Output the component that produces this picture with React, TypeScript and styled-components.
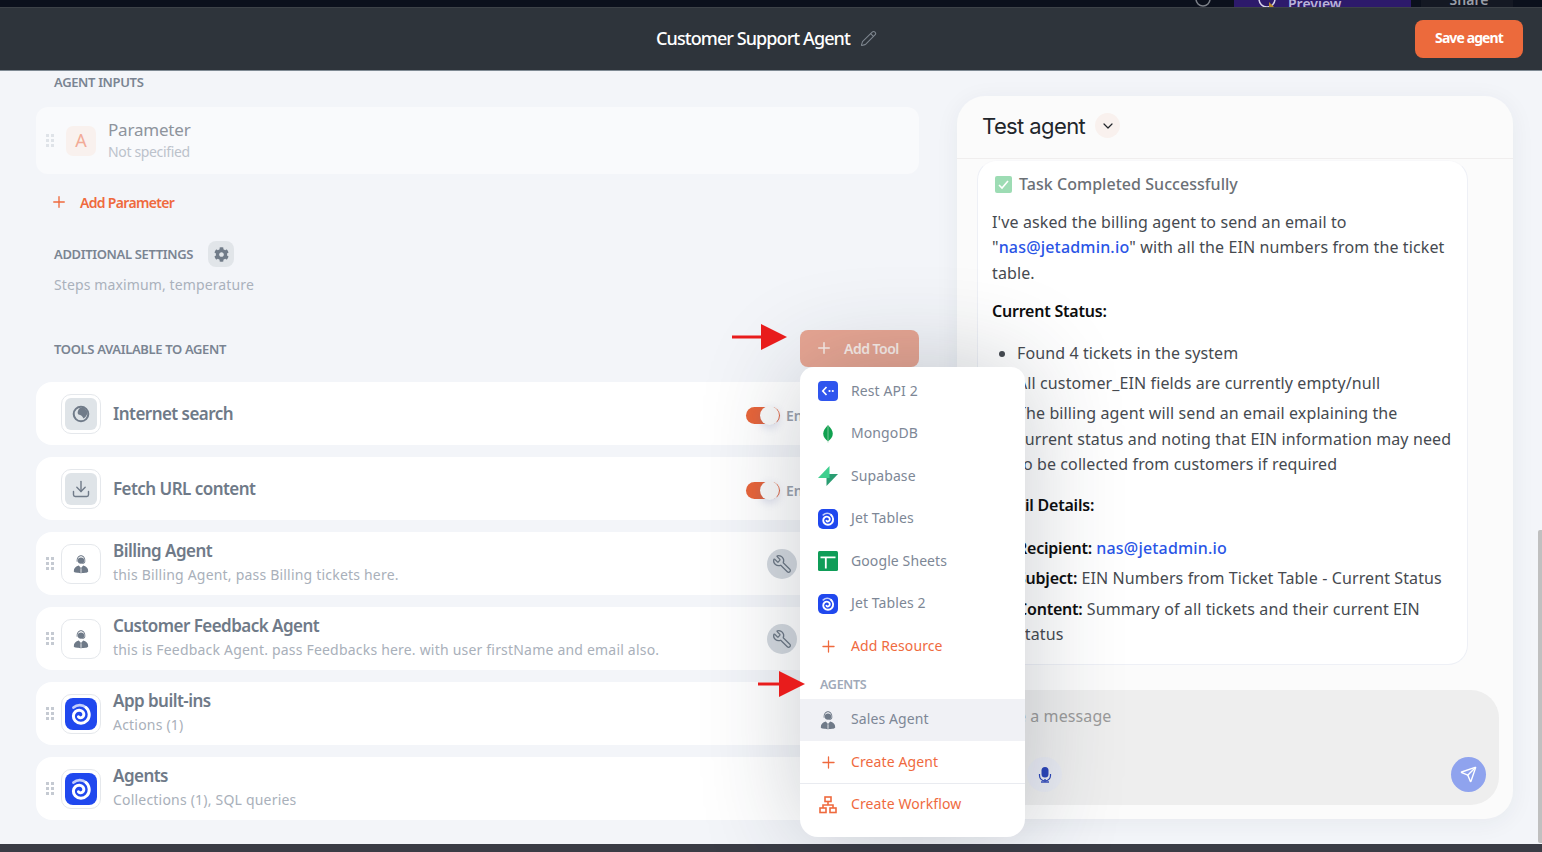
import React from 'react'
import styled, { createGlobalStyle } from 'styled-components'
import { ChevronDown, Download, Pencil, Plus, Send, Wrench } from 'lucide-react'
import { FaCog } from 'react-icons/fa'

const FONT = `"Noto Sans", "Liberation Sans", sans-serif`

const GlobalStyle = createGlobalStyle`
  html, body { margin: 0; height: 100%; overflow: hidden; }
  body { font-family: ${FONT}; background: #0b101c; }
  * { box-sizing: border-box; }
`

const Page = styled.div`
  height: 100vh;
  display: flex;
  flex-direction: column;
  position: relative;
  overflow: hidden;
`

const TopStrip = styled.div`
  height: 8px;
  flex: none;
  background: #0b101c;
  border-bottom: 1px solid #3d4248;
  display: flex;
  justify-content: flex-end;
  padding-right: 29px;
  overflow: hidden;
`

const TopIcon = styled.div`
  height: 7px;
  margin-right: 22px;
  display: flex;
  align-items: flex-end;
  color: #7c8088;
`

const TopPreview = styled.div`
  width: 177px;
  height: 7px;
  margin-right: 10px;
  background: #2d1a6b;
  color: #b9b2d8;
  font-size: 14px;
  font-weight: 600;
  line-height: 7px;
  padding-left: 21px;
  display: flex;
  align-items: flex-end;
  gap: 7px;
`

const TopShare = styled.div`
  width: 92px;
  height: 7px;
  padding-left: 4px;
  background: #141823;
  color: #9a9ea8;
  font-size: 14px;
  font-weight: 600;
  text-align: center;
  line-height: 0;
`

const Header = styled.header`
  height: 63px;
  flex: none;
  background: #2e343b;
  border-bottom: 1px solid #7f8a94;
  display: flex;
  align-items: center;
  justify-content: space-between;
  padding: 0 19px 0 656px;
`

const Title = styled.div`
  display: flex;
  align-items: center;
  gap: 10px;
  padding-bottom: 2px;
  color: #fff;
  font-size: 18px;
  font-weight: 500;
  letter-spacing: -0.92px;
  svg { color: #7d858e; }
`

const SaveButton = styled.button`
  width: 108px;
  height: 38px;
  border: none;
  border-radius: 8px;
  padding: 0 0 3px;
  background: #ec6a3c;
  color: #fff;
  font-family: ${FONT};
  font-size: 14px;
  font-weight: 700;
  letter-spacing: -0.9px;
`

const Main = styled.main`
  flex: 1;
  min-height: 0;
  background: #f3f5f9;
  display: flex;
  position: relative;
`

const LeftColumn = styled.section`
  width: 957px;
  flex: none;
  padding: 2px 38px 0 36px;
`

const SectionLabel = styled.div`
  color: #7a8492;
  font-size: 13px;
  font-weight: 600;
  letter-spacing: -0.35px;
  text-transform: uppercase;
  line-height: 18px;
`

const InputsLabel = styled(SectionLabel)`
  margin: 0 0 16px 18px;
`

const ParameterCard = styled.div`
  height: 67px;
  border-radius: 12px;
  background: #f9fafc;
  display: flex;
  align-items: center;
  padding-left: 10px;
`

const Handle = styled.div<{ $faded?: boolean; $gap: number }>`
  width: 8px;
  height: 15px;
  flex: none;
  margin-right: ${({ $gap }) => $gap}px;
  background-image: radial-gradient(circle, ${({ $faded }) => ($faded ? '#dfe3e8' : '#c5cad2')} 1.5px, transparent 1.6px);
  background-size: 5px 5px;
  background-position: -1px 0;
`

const LetterTile = styled.div`
  width: 30px;
  height: 30px;
  border-radius: 7px;
  background: #f9f1ee;
  color: #f2ab97;
  font-size: 18px;
  padding-bottom: 2px;
  display: flex;
  align-items: center;
  justify-content: center;
  margin-right: 12px;
`

const ParameterText = styled.div`
  margin-top: -1px;
`

const ParameterName = styled.div`
  color: #8e949c;
  font-size: 17px;
  line-height: 22px;
  letter-spacing: -0.2px;
`

const ParameterType = styled.div`
  margin-top: 1px;
  color: #bcc2cb;
  font-size: 14px;
  line-height: 20px;
  letter-spacing: -0.35px;
`

const AddParameter = styled.div`
  height: 20px;
  margin: 18px 0 0 14px;
  display: flex;
  align-items: center;
  gap: 12px;
  color: #ef6a3e;
  font-size: 14px;
  font-weight: 600;
  letter-spacing: -0.68px;
`

const SettingsRow = styled.div`
  margin: 29px 0 0 18px;
  display: flex;
  align-items: center;
  gap: 15px;
`

const GearButton = styled.div`
  width: 26px;
  height: 26px;
  border-radius: 8px;
  background: #e1e5e9;
  color: #717c89;
  display: flex;
  align-items: center;
  justify-content: center;
`

const SettingsHint = styled.div`
  margin: 8px 0 0 18px;
  color: #aab1bc;
  font-size: 14px;
  line-height: 20px;
  letter-spacing: 0.12px;
`

const ToolsHeader = styled.div`
  height: 37px;
  margin: 35px 0 15px 18px;
  display: flex;
  align-items: center;
  justify-content: space-between;
  position: relative;
`

const AddToolWrap = styled.div`
  position: relative;
`

const AddToolButton = styled.div`
  width: 119px;
  height: 37px;
  border-radius: 8px;
  background: #e8a693;
  color: #fbeee9;
  font-size: 14px;
  font-weight: 600;
  letter-spacing: -0.5px;
  display: flex;
  align-items: center;
  gap: 11px;
  padding: 0 0 1px 15px;
`

const Arrow = styled.svg<{ $top: number; $left: number }>`
  position: absolute;
  top: ${({ $top }) => $top}px;
  left: ${({ $left }) => $left}px;
  z-index: 5;
`

const CardList = styled.div`
  display: flex;
  flex-direction: column;
  gap: 12px;
`

const ToolCard = styled.div`
  height: 63px;
  border-radius: 16px;
  background: #fff;
  display: flex;
  align-items: center;
  padding-left: 10px;
  position: relative;
`

const HandleSlot = styled.div`
  width: 15px;
  flex: none;
`

const IconFrame = styled.div`
  width: 40px;
  height: 40px;
  flex: none;
  border: 1px solid #e5e8ec;
  border-radius: 10px;
  margin-right: 12px;
  display: flex;
  align-items: center;
  justify-content: center;
`

const IconTile = styled.div`
  width: 32px;
  height: 32px;
  border-radius: 6px;
  background: #dfe4e8;
  display: flex;
  align-items: center;
  justify-content: center;
  color: #707b89;
`

const CardText = styled.div`
  flex: 1;
  min-width: 0;
`

const CardTitle = styled.div`
  color: #6f7a88;
  font-size: 17px;
  font-weight: 600;
  line-height: 24px;
  letter-spacing: -0.54px;
`

const CardSub = styled.div`
  margin: 2px 0 3px;
  color: #a9b0ba;
  font-size: 14px;
  line-height: 20px;
  letter-spacing: 0.2px;
`

const ToggleGroup = styled.div`
  position: absolute;
  left: 710px;
  top: 24px;
  display: flex;
  align-items: center;
  gap: 6px;
  color: #9ba2ad;
  font-size: 14px;
  font-weight: 600;
`

const Toggle = styled.div`
  width: 34px;
  height: 17px;
  border-radius: 9px;
  background: #e8653a;
  position: relative;
  &::after {
    content: '';
    position: absolute;
    right: 1px;
    top: -1px;
    width: 19px;
    height: 19px;
    border-radius: 50%;
    background: #fafafa;
    box-shadow: 0 3px 8px rgba(90, 100, 170, 0.22);
  }
`

const WrenchBadge = styled.div`
  position: absolute;
  left: 731px;
  top: 17px;
  width: 30px;
  height: 30px;
  border-radius: 50%;
  background: #d4d9df;
  color: #6c7784;
  display: flex;
  align-items: center;
  justify-content: center;
  svg { transform: scaleX(-1); }
`

const Dropdown = styled.div`
  position: absolute;
  top: 37px;
  left: 0;
  z-index: 4;
  width: 225px;
  height: 470px;
  background: #fff;
  border-radius: 14px 14px 18px 18px;
  box-shadow: 0 0 100px rgba(30, 40, 60, 0.24);
  padding-top: 3px;
`

const MenuItem = styled.div<{ $accent?: boolean; $active?: boolean }>`
  height: 42.5px;
  display: flex;
  align-items: center;
  padding: 0 0 2px 18px;
  gap: 13px;
  color: ${({ $accent }) => ($accent ? '#ef6a3e' : '#7d8796')};
  background: ${({ $active }) => ($active ? '#f0f1f5' : 'transparent')};
  font-size: 14px;
  letter-spacing: 0.1px;
`

const MenuIcon = styled.span`
  width: 20px;
  height: 20px;
  margin-top: 2px;
  flex: none;
  display: flex;
  align-items: center;
  justify-content: center;
`

const MenuLabel = styled.div`
  position: relative;
  height: 31px;
  padding: 9px 0 0 20px;
  color: #a0a9b8;
  font-size: 12.5px;
  font-weight: 600;
  line-height: 16px;
  letter-spacing: -0.3px;
`

const MenuDivider = styled.div`
  height: 1px;
  margin-top: -1px;
  background: #e9ebf0;
`

const Panel = styled.aside`
  position: absolute;
  left: 957px;
  top: 25px;
  width: 556px;
  height: 723px;
  background: #fbfbfb;
  border-radius: 28px;
  box-shadow: 0 4px 24px rgba(40, 50, 70, 0.06);
  display: flex;
  flex-direction: column;
  padding-bottom: 14px;
`

const PanelHeader = styled.div`
  height: 63px;
  flex: none;
  border-bottom: 1px solid #f0eeee;
  padding: 0 0 3px 25px;
  display: flex;
  align-items: center;
  gap: 10px;
  color: #22262b;
  font-family: Inter, sans-serif;
  font-size: 22px;
  letter-spacing: -0.6px;
`

const ChevronBadge = styled.div`
  width: 25px;
  height: 25px;
  border-radius: 50%;
  background: #f9f1ee;
  display: flex;
  align-items: center;
  justify-content: center;
`

const Message = styled.div`
  width: 491px;
  height: 505px;
  margin: 1px 0 0 20px;
  background: #fff;
  border: 1px solid #eef0f6;
  border-top-color: #f8f8fa;
  border-radius: 20px;
  padding: 11px 14px 0;
  color: #464a50;
  font-size: 16px;
  line-height: 25.6px;
  letter-spacing: 0.11px;
  flex: none;
`

const TaskTitle = styled.div`
  display: flex;
  align-items: center;
  gap: 7px;
  margin: 0 0 12px 3px;
  color: #6b7076;
  font-weight: 500;
  letter-spacing: 0.04px;
`

const Check = styled.span`
  width: 17px;
  height: 17px;
  border-radius: 2px;
  background: #9ddcb4;
  display: flex;
  align-items: center;
  justify-content: center;
`

const Paragraph = styled.p`
  margin: 0 0 12.4px;
`

const Strong = styled.strong`
  color: #0d0d0d;
  font-weight: 600;
  letter-spacing: -0.22px;
`

const Link = styled.span`
  color: #2a55e6;
  font-weight: 500;
  letter-spacing: 0.18px;
`

const Bullets = styled.ul`
  margin: 17px 0 15.4px;
  padding: 0 0 0 25px;
  li { margin-bottom: 4.4px; }
  li:last-child { line-height: 25.4px; }
`

const DetailList = styled.div`
  margin: 17px 0 0;
  padding-left: 25px;
`

const Plain = styled.div`
  margin-bottom: 5px;
  &:last-child { line-height: 25px; }
`

const Composer = styled.div`
  width: 522px;
  height: 115px;
  margin: 25px 0 0 20px;
  background: #eeeeee;
  border-radius: 28px;
  padding: 13px 13px 13px 13px;
  display: flex;
  flex-direction: column;
  justify-content: space-between;
  flex: none;
`

const Placeholder = styled.div`
  color: #9b9b9b;
  font-size: 16px;
  line-height: 26px;
  letter-spacing: 0.1px;
`

const ComposerActions = styled.div`
  display: flex;
  justify-content: space-between;
  padding-left: 37px;
`

const RoundButton = styled.div<{ $bg: string }>`
  width: 35px;
  height: 35px;
  border-radius: 50%;
  background: ${({ $bg }) => $bg};
  display: flex;
  align-items: center;
  justify-content: center;
`

const Scrollbar = styled.div`
  position: absolute;
  right: 0;
  top: 459px;
  bottom: 1px;
  width: 4px;
  background: #c0c0c0;
  border-radius: 2px 0 0 2px;
`

const BottomStrip = styled.div`
  height: 8px;
  flex: none;
  background: #3a3c45;
`

const SwirlLogo = ({ size }: { size: number }) => (
  <svg width={size} height={size} viewBox="0 0 32 32">
    <rect width="32" height="32" rx="8" fill="#2048ee" />
    <path d="M8.500 9.500C12 6.500 17.500 6.300 21 9.500" fill="none" stroke="#c3cefa" strokeWidth="2.800" strokeLinecap="round" />
    <path
      d="M21 9.500c4 3.600 4.200 9.500 1 13-3.200 3.500-8.800 3.600-11.800.3-2.600-2.900-2.300-7 .2-9.200 2.300-2 5.800-1.800 7.500.3 1.500 1.800 1.100 4.300-.6 5.400-1.300.9-3 .6-3.800-.5"
      fill="none"
      stroke="#fff"
      strokeWidth="3"
      strokeLinecap="round"
    />
  </svg>
)

const AgentGlyph = () => (
  <svg width="20" height="20" viewBox="0 0 20 20" fill="#6f7a88">
    <circle cx="10" cy="6.600" r="3.200" />
    <path d="M5.700 7.800C5.200 3.800 7.500 1.300 10 1.300s4.800 2.500 4.300 6.500c-.2 1-1.300 2-3 2.200v-.7c1.300-.2 2-.9 2.100-1.700.4-3.200-1.300-5.300-3.400-5.300S6.200 4.400 6.600 7.800z" />
    <path d="M2.800 17.300c0-3.300 2-5 5-5.800L10 14l2.200-2.500c3 .8 5 2.500 5 5.800 0 1.200-3 1.900-7.200 1.900s-7.200-.7-7.200-1.900z" />
    <path d="M10 14.300v4.500" stroke="#fff" strokeWidth="0.800" />
  </svg>
)

const GlobeGlyph = () => (
  <svg width="18" height="18" viewBox="0 0 18 18" fill="none">
    <circle cx="9" cy="9" r="7.300" stroke="#707b89" strokeWidth="2" />
    <path d="M8 3c3-1 7 1 7.500 5-.5 2-2 4.500-4 5.500C10.500 11 9 10 6.500 9.500 5 8.500 5.500 5 8 3z" fill="#707b89" />
  </svg>
)

const RestApiIcon = () => (
  <svg width="20" height="20" viewBox="0 0 20 20">
    <rect width="20" height="20" rx="4" fill="#2f55ee" />
    <path d="M8.500 6 4.800 10l3.700 4" fill="none" stroke="#fff" strokeWidth="1.700" />
    <circle cx="11.500" cy="10" r="1.100" fill="#fff" />
    <circle cx="14.800" cy="10" r="1.100" fill="#fff" />
  </svg>
)

const MongoIcon = () => (
  <svg width="20" height="20" viewBox="0 0 20 20">
    <path d="M10 1c2.800 3 4.800 5.500 4.800 8.800 0 3.200-2.200 5.700-4.800 7.700-2.600-2-4.800-4.500-4.800-7.700C5.200 6.500 7.200 4 10 1z" fill="#10a14f" />
    <path d="M10 1v18" stroke="#b8dcc6" strokeWidth="0.600" />
  </svg>
)

const SupabaseIcon = () => (
  <svg width="20" height="20" viewBox="0 0 20 20">
    <path d="M8.500 20V8h11.500z" fill="#2a9d72" />
    <path d="M11.500 0v12H0z" fill="#3ecf8e" />
  </svg>
)

const SheetsIcon = () => (
  <svg width="20" height="20" viewBox="0 0 20 20">
    <rect width="20" height="20" rx="1.500" fill="#0f9d58" />
    <path d="M2.500 5.500h15v1.700H8.700V17.500H6.900V7.200H2.500z" fill="#fff" />
  </svg>
)

const WorkflowIcon = () => (
  <svg width="18" height="18" viewBox="0 0 18 18" fill="none" stroke="#ef6a3e" strokeWidth="1.600">
    <rect x="6" y="1" width="6" height="4.500" />
    <rect x="1" y="12" width="6" height="4.500" />
    <rect x="11" y="12" width="6" height="4.500" />
    <path d="M9 5.500v3.500M4 12V9h10v3" />
  </svg>
)

const MicIcon = () => (
  <svg width="14" height="16" viewBox="0 0 14 16" fill="#2a44b8">
    <rect x="3.500" y="0" width="7" height="10.500" rx="3.500" />
    <path d="M1.500 7v1.500a5.500 5.500 0 0 0 11 0V7" fill="none" stroke="#2a44b8" strokeWidth="1.200" />
    <rect x="6.300" y="12" width="1.400" height="2.500" />
    <rect x="3" y="14.300" width="8" height="1.400" />
  </svg>
)

const tools = [
  { name: 'Internet search', icon: <GlobeGlyph /> },
  { name: 'Fetch URL content', icon: <Download size={20} strokeWidth={1.7} /> },
]

const resources = [
  { name: 'Rest API 2', icon: <RestApiIcon /> },
  { name: 'MongoDB', icon: <MongoIcon /> },
  { name: 'Supabase', icon: <SupabaseIcon /> },
  { name: 'Jet Tables', icon: <SwirlLogo size={20} /> },
  { name: 'Google Sheets', icon: <SheetsIcon /> },
  { name: 'Jet Tables 2', icon: <SwirlLogo size={20} /> },
]

const redArrow = (
  <>
    <path d="M0 11.500h30v3H0z" fill="#e81c1c" />
    <path d="M29 0l26 13-26 13z" fill="#e81c1c" />
  </>
)

export default function App() {
  return (
    <Page>
      <GlobalStyle />
      <TopStrip>
        <TopIcon>
          <svg width="18" height="7" viewBox="0 7 18 7" fill="none" stroke="currentColor" strokeWidth="1.500">
            <circle cx="9" cy="6" r="7" />
          </svg>
        </TopIcon>
        <TopPreview>
          <svg width="26" height="7" viewBox="0 9 26 7" fill="none">
            <circle cx="12" cy="8" r="8" stroke="#d8d4ea" strokeWidth="1.500" />
            <path d="M14 16v-5l5 5z" fill="#b98a2b" />
          </svg>
          Preview
        </TopPreview>
        <TopShare>Share</TopShare>
      </TopStrip>
      <Header>
        <Title>
          Customer Support Agent
          <Pencil size={17} strokeWidth={1.5} />
        </Title>
        <SaveButton>Save agent</SaveButton>
      </Header>
      <Main>
        <LeftColumn>
          <InputsLabel>Agent inputs</InputsLabel>
          <ParameterCard>
            <Handle $faded $gap={12} />
            <LetterTile>A</LetterTile>
            <ParameterText>
              <ParameterName>Parameter</ParameterName>
              <ParameterType>Not specified</ParameterType>
            </ParameterText>
          </ParameterCard>
          <AddParameter>
            <Plus size={18} strokeWidth={1.8} />
            Add Parameter
          </AddParameter>
          <SettingsRow>
            <SectionLabel>Additional settings</SectionLabel>
            <GearButton>
              <FaCog size={15} />
            </GearButton>
          </SettingsRow>
          <SettingsHint>Steps maximum, temperature</SettingsHint>
          <ToolsHeader>
            <SectionLabel>Tools available to agent</SectionLabel>
            <Arrow $top={-6} $left={678} width="55" height="26" viewBox="0 0 55 26">
              {redArrow}
            </Arrow>
            <AddToolWrap>
              <AddToolButton>
                <Plus size={18} strokeWidth={2} />
                Add Tool
              </AddToolButton>
              <Dropdown>
                {resources.map(item => (
                  <MenuItem key={item.name}>
                    <MenuIcon>{item.icon}</MenuIcon>
                    {item.name}
                  </MenuItem>
                ))}
                <MenuItem $accent>
                  <MenuIcon>
                    <Plus size={19} strokeWidth={1.6} />
                  </MenuIcon>
                  Add Resource
                </MenuItem>
                <MenuLabel>
                  AGENTS
                  <Arrow $top={3} $left={-42} width="47" height="26" viewBox="8 0 47 26">
                    {redArrow}
                  </Arrow>
                </MenuLabel>
                <MenuItem $active>
                  <MenuIcon>
                    <AgentGlyph />
                  </MenuIcon>
                  Sales Agent
                </MenuItem>
                <MenuItem $accent>
                  <MenuIcon>
                    <Plus size={19} strokeWidth={1.6} />
                  </MenuIcon>
                  Create Agent
                </MenuItem>
                <MenuDivider />
                <MenuItem $accent>
                  <MenuIcon>
                    <WorkflowIcon />
                  </MenuIcon>
                  Create Workflow
                </MenuItem>
              </Dropdown>
            </AddToolWrap>
          </ToolsHeader>
          <CardList>
            {tools.map(tool => (
              <ToolCard key={tool.name}>
                <HandleSlot />
                <IconFrame>
                  <IconTile>{tool.icon}</IconTile>
                </IconFrame>
                <CardText>
                  <CardTitle>{tool.name}</CardTitle>
                </CardText>
                <ToggleGroup>
                  <Toggle />
                  Enabled
                </ToggleGroup>
              </ToolCard>
            ))}
            <ToolCard>
              <Handle $gap={7} />
              <IconFrame>
                <AgentGlyph />
              </IconFrame>
              <CardText>
                <CardTitle>Billing Agent</CardTitle>
                <CardSub>this Billing Agent, pass Billing tickets here.</CardSub>
              </CardText>
              <WrenchBadge>
                <Wrench size={20} strokeWidth={1.5} />
              </WrenchBadge>
            </ToolCard>
            <ToolCard>
              <Handle $gap={7} />
              <IconFrame>
                <AgentGlyph />
              </IconFrame>
              <CardText>
                <CardTitle>Customer Feedback Agent</CardTitle>
                <CardSub>this is Feedback Agent. pass Feedbacks here. with user firstName and email also.</CardSub>
              </CardText>
              <WrenchBadge>
                <Wrench size={20} strokeWidth={1.5} />
              </WrenchBadge>
            </ToolCard>
            <ToolCard>
              <Handle $gap={7} />
              <IconFrame>
                <SwirlLogo size={32} />
              </IconFrame>
              <CardText>
                <CardTitle>App built-ins</CardTitle>
                <CardSub>Actions (1)</CardSub>
              </CardText>
            </ToolCard>
            <ToolCard>
              <Handle $gap={7} />
              <IconFrame>
                <SwirlLogo size={32} />
              </IconFrame>
              <CardText>
                <CardTitle>Agents</CardTitle>
                <CardSub>Collections (1), SQL queries</CardSub>
              </CardText>
            </ToolCard>
          </CardList>
        </LeftColumn>
        <Panel>
          <PanelHeader>
            Test agent
            <ChevronBadge>
              <ChevronDown size={16} strokeWidth={1.8} />
            </ChevronBadge>
          </PanelHeader>
          <Message>
            <TaskTitle>
              <Check>
                <svg width="13" height="13" viewBox="0 0 13 13" fill="none" stroke="#fff" strokeWidth="1.600">
                  <path d="M2 7l3 3 6-7" />
                </svg>
              </Check>
              Task Completed Successfully
            </TaskTitle>
            <Paragraph>
              I've asked the billing agent to send an email to
              <br />"<Link>nas@jetadmin.io</Link>" with all the EIN numbers from the ticket
              <br />table.
            </Paragraph>
            <Paragraph>
              <Strong>Current Status:</Strong>
            </Paragraph>
            <Bullets>
              <li>Found 4 tickets in the system</li>
              <li>All customer_EIN fields are currently empty/null</li>
              <li>
                The billing agent will send an email explaining the
                <br />
                current status and noting that EIN information may need
                <br />
                to be collected from customers if required
              </li>
            </Bullets>
            <Paragraph>
              <Strong>Email Details:</Strong>
            </Paragraph>
            <DetailList>
              <Plain>
                <Strong>Recipient:</Strong> <Link>nas@jetadmin.io</Link>
              </Plain>
              <Plain>
                <Strong>Subject:</Strong> EIN Numbers from Ticket Table - Current Status
              </Plain>
              <Plain>
                <Strong>Content:</Strong> Summary of all tickets and their current EIN
                <br />
                status
              </Plain>
            </DetailList>
          </Message>
          <Composer>
            <Placeholder>Type a message</Placeholder>
            <ComposerActions>
              <RoundButton $bg="#e9ebf3">
                <MicIcon />
              </RoundButton>
              <RoundButton $bg="#8fa3ee">
                <Send size={17} color="#fff" strokeWidth={2} />
              </RoundButton>
            </ComposerActions>
          </Composer>
        </Panel>
        <Scrollbar />
      </Main>
      <BottomStrip />
    </Page>
  )
}
